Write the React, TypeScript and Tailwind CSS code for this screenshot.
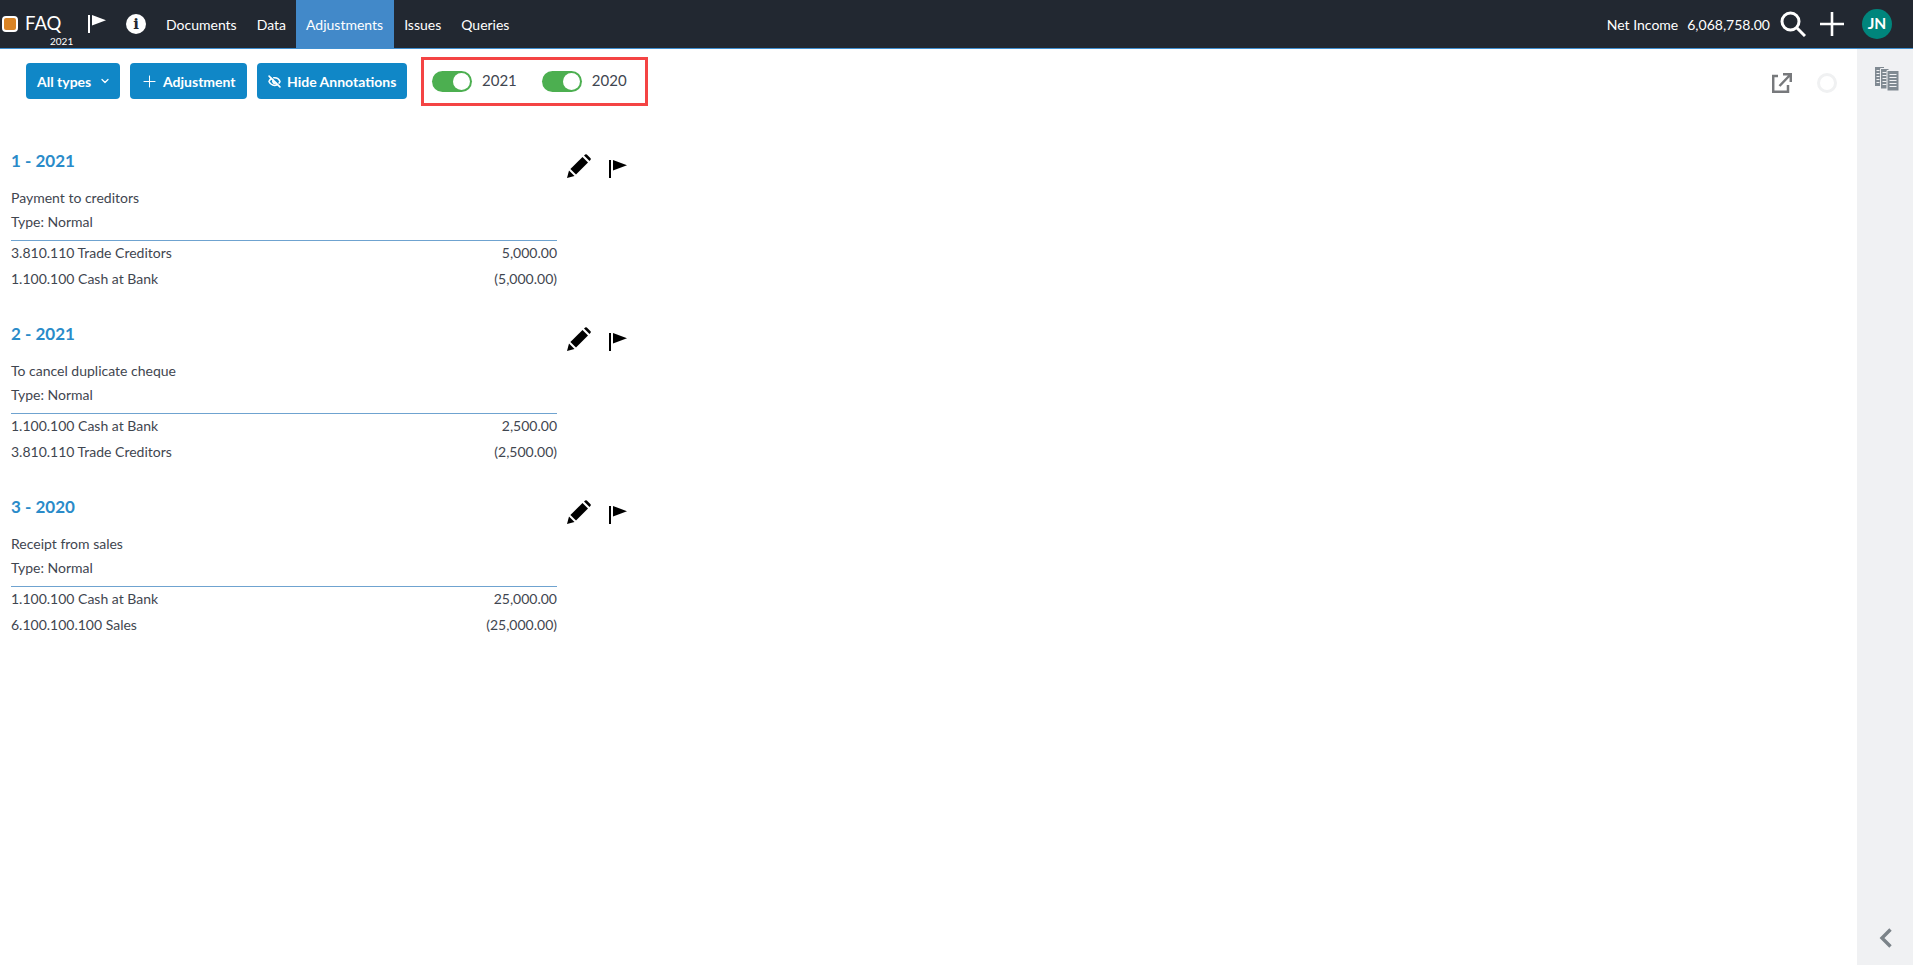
import { Plus, ChevronDown, EyeOff } from 'lucide-react'

const entries = [
  { title: '1 - 2021', desc: 'Payment to creditors', rows: [['3.810.110 Trade Creditors', '5,000.00'], ['1.100.100 Cash at Bank', '(5,000.00)']] },
  { title: '2 - 2021', desc: 'To cancel duplicate cheque', rows: [['1.100.100 Cash at Bank', '2,500.00'], ['3.810.110 Trade Creditors', '(2,500.00)']] },
  { title: '3 - 2020', desc: 'Receipt from sales', rows: [['1.100.100 Cash at Bank', '25,000.00'], ['6.100.100.100 Sales', '(25,000.00)']] },
]

function Flag({ className }: { className: string }) {
  return (
    <svg viewBox="0 0 18 18" className={className} fill="currentColor">
      <rect x="0" y="0" width="2" height="18" />
      <path d="M4 0 L18 5.2 L4 10.5 Z" />
    </svg>
  )
}

function Pencil() {
  return (
    <svg viewBox="0 0 24 24" className="w-[24px] h-[24px] text-black" fill="currentColor">
      <path d="M0 24 L2 16.5 L7.5 22 Z" />
      <path d="M3.4 15 L15.5 3 L21 8.5 L9 20.6 Z" />
      <path d="M17 1.5 L18.2 0.4 Q19 0 19.8 0.4 L23.6 4.2 Q24 5 23.6 5.8 L22.5 7 Z" />
    </svg>
  )
}

function Toggle({ label }: { label: string }) {
  return (
    <div className="flex items-center gap-[10px]">
      <div className="w-[40px] h-[21px] rounded-full bg-[#4caf50] flex items-center justify-end pr-[2px]">
        <div className="w-[17px] h-[17px] rounded-full bg-white"></div>
      </div>
      <span className="text-[15px] text-[#3f4650] relative -top-px">{label}</span>
    </div>
  )
}

function Entry({ title, desc, rows }: { title: string; desc: string; rows: string[][] }) {
  return (
    <div className="flex h-[173px]">
      <div className="w-[546px] text-[14px] text-[#3f4650]">
        <div className="h-[39px] pt-[2px] text-[17px] font-bold text-[#2a8bc9] leading-[24px]">{title}</div>
        <div className="h-[24px] leading-[24px]">{desc}</div>
        <div className="h-[24px] leading-[24px]">Type: Normal</div>
        <div className="mt-[6px] border-t border-[#6fa3d0]">
          {rows.map((r) => (
            <div key={r[0]} className="flex justify-between h-[26px] leading-[24px]">
              <span>{r[0]}</span>
              <span>{r[1]}</span>
            </div>
          ))}
        </div>
      </div>
      <div className="flex items-start ml-[10px] pt-[7px] gap-[18px]">
        <Pencil />
        <Flag className="w-[18px] h-[18px] mt-[6px] text-black" />
      </div>
    </div>
  )
}

export default function App() {
  return (
    <div className="h-[965px] flex flex-col overflow-hidden bg-white font-['Lato','Liberation_Sans',sans-serif]">
      <div className="h-[49px] shrink-0 bg-[#222831] border-b border-[#3f8fd0] flex items-stretch text-white text-[14px]">
        <div className="flex items-center pl-[2px]">
          <div className="w-[16px] h-[16px] rounded-[4px] bg-[#d98324] border-2 border-white"></div>
          <div className="relative ml-[7px] w-[36px]">
            <span className="text-[18.5px] leading-none">FAQ</span>
            <span className="absolute left-[25px] top-[22px] text-[10px] leading-none">2021</span>
          </div>
        </div>
        <div className="flex items-center ml-[27px]">
          <Flag className="w-[18px] h-[18px] text-white" />
          <div className="ml-[20px] w-[20px] h-[20px] rounded-full bg-white flex items-center justify-center text-[#222831] text-[15px] font-black font-['DejaVu_Serif',serif]">i</div>
        </div>
        <div className="flex ml-[10px]">
          <div className="px-[10px] flex items-center">Documents</div>
          <div className="px-[10px] flex items-center">Data</div>
          <div className="pl-[10px] pr-[11px] flex items-center bg-[#4289c9]">Adjustments</div>
          <div className="px-[10px] flex items-center">Issues</div>
          <div className="px-[10px] flex items-center">Queries</div>
        </div>
        <div className="ml-auto flex items-center pr-[21px]">
          <span>Net Income</span>
          <span className="ml-[9px]">6,068,758.00</span>
          <svg viewBox="0 0 26 26" className="ml-[10px] w-[26px] h-[26px]" fill="none" stroke="currentColor">
            <circle cx="10.5" cy="10.5" r="8.5" strokeWidth="3" />
            <path d="M17 17 L25 25" strokeWidth="3" />
          </svg>
          <svg viewBox="0 0 24 24" className="ml-[14px] w-[24px] h-[24px]" fill="none" stroke="currentColor" strokeWidth="2.6">
            <path d="M12 0 V24 M0 12 H24" />
          </svg>
          <div className="ml-[18px] w-[30px] h-[30px] rounded-full bg-[#00857c] flex items-center justify-center text-[15.5px] font-bold">JN</div>
        </div>
      </div>

      <div className="flex-1 flex min-h-0">
        <div className="flex-1 flex flex-col min-w-0">
          <div className="flex items-center h-[64px] pl-[26px] pr-[20px]">
            <button className="h-[36px] w-[94px] pl-[11px] rounded-[4px] bg-[#1087c7] text-white text-[14px] font-bold flex items-center gap-[8px]">
              All types <ChevronDown className="w-[12px] h-[12px]" strokeWidth={2.5} />
            </button>
            <button className="ml-[10px] h-[36px] w-[117px] pl-[10px] rounded-[4px] bg-[#1087c7] text-white text-[14px] font-bold flex items-center gap-[4px]">
              <Plus className="w-[19px] h-[19px]" strokeWidth={1.25} /> Adjustment
            </button>
            <button className="ml-[10px] h-[36px] w-[150px] pl-[11px] rounded-[4px] bg-[#1087c7] text-white text-[14px] font-bold flex items-center gap-[6px]">
              <EyeOff className="w-[13px] h-[13px]" strokeWidth={3} /> Hide Annotations
            </button>
            <div className="ml-[14px] h-[49px] w-[227px] border-[3px] border-[#f44444] flex items-center pl-[8px] gap-[25px]">
              <Toggle label="2021" />
              <Toggle label="2020" />
            </div>
            <svg viewBox="0 0 20 20" className="ml-auto mt-[4px] w-[20px] h-[20px]" fill="none" stroke="#77797c" strokeWidth="2.5">
              <path d="M6 3 H1.2 V18.8 H16 V12" />
              <path d="M7.5 13 L18 2 M11 1.2 H18.8 V9" />
            </svg>
            <div className="ml-[25px] mt-[4px] w-[20px] h-[20px] rounded-full border-[3px] border-[#f0f1f2]"></div>
          </div>
          <div className="pl-[11px] pt-[34px]">
            {entries.map((e) => (
              <Entry key={e.title} title={e.title} desc={e.desc} rows={e.rows} />
            ))}
          </div>
        </div>
        <div className="w-[56px] shrink-0 bg-[#f0f1f3] flex flex-col items-center justify-between pt-[18px] pb-[17px]">
          <svg viewBox="0 0 24 24" className="ml-[4px] w-[24px] h-[24px]">
            <path d="M0 0 H9 V19 H0 Z" fill="#808a92" />
            <path d="M5.5 1.5 H14 V22 H5.5 Z" fill="#808a92" stroke="#f0f1f3" strokeWidth="1" />
            <path d="M12 3.5 H24 V24 H12 Z" fill="#808a92" stroke="#f0f1f3" strokeWidth="1" />
            <path d="M14.5 7.5 H21.5 M14.5 10.5 H21.5 M14.5 13.5 H21.5 M14.5 16.5 H21.5 M14.5 19.5 H21.5 M7.5 5.5 H11.5 M7.5 8.5 H11.5 M7.5 11.5 H11.5 M7.5 14.5 H11.5 M7.5 17.5 H11.5 M1.5 3.5 H4.5 M1.5 6.5 H4.5 M1.5 9.5 H4.5 M1.5 12.5 H4.5 M1.5 15.5 H4.5" stroke="#f0f1f3" strokeWidth="1" />
          </svg>
          <svg viewBox="0 0 13 20" className="w-[13px] h-[20px]" fill="none" stroke="#7b8389" strokeWidth="3.4">
            <path d="M11.5 1.5 L3 10 L11.5 18.5" />
          </svg>
        </div>
      </div>
    </div>
  )
}
